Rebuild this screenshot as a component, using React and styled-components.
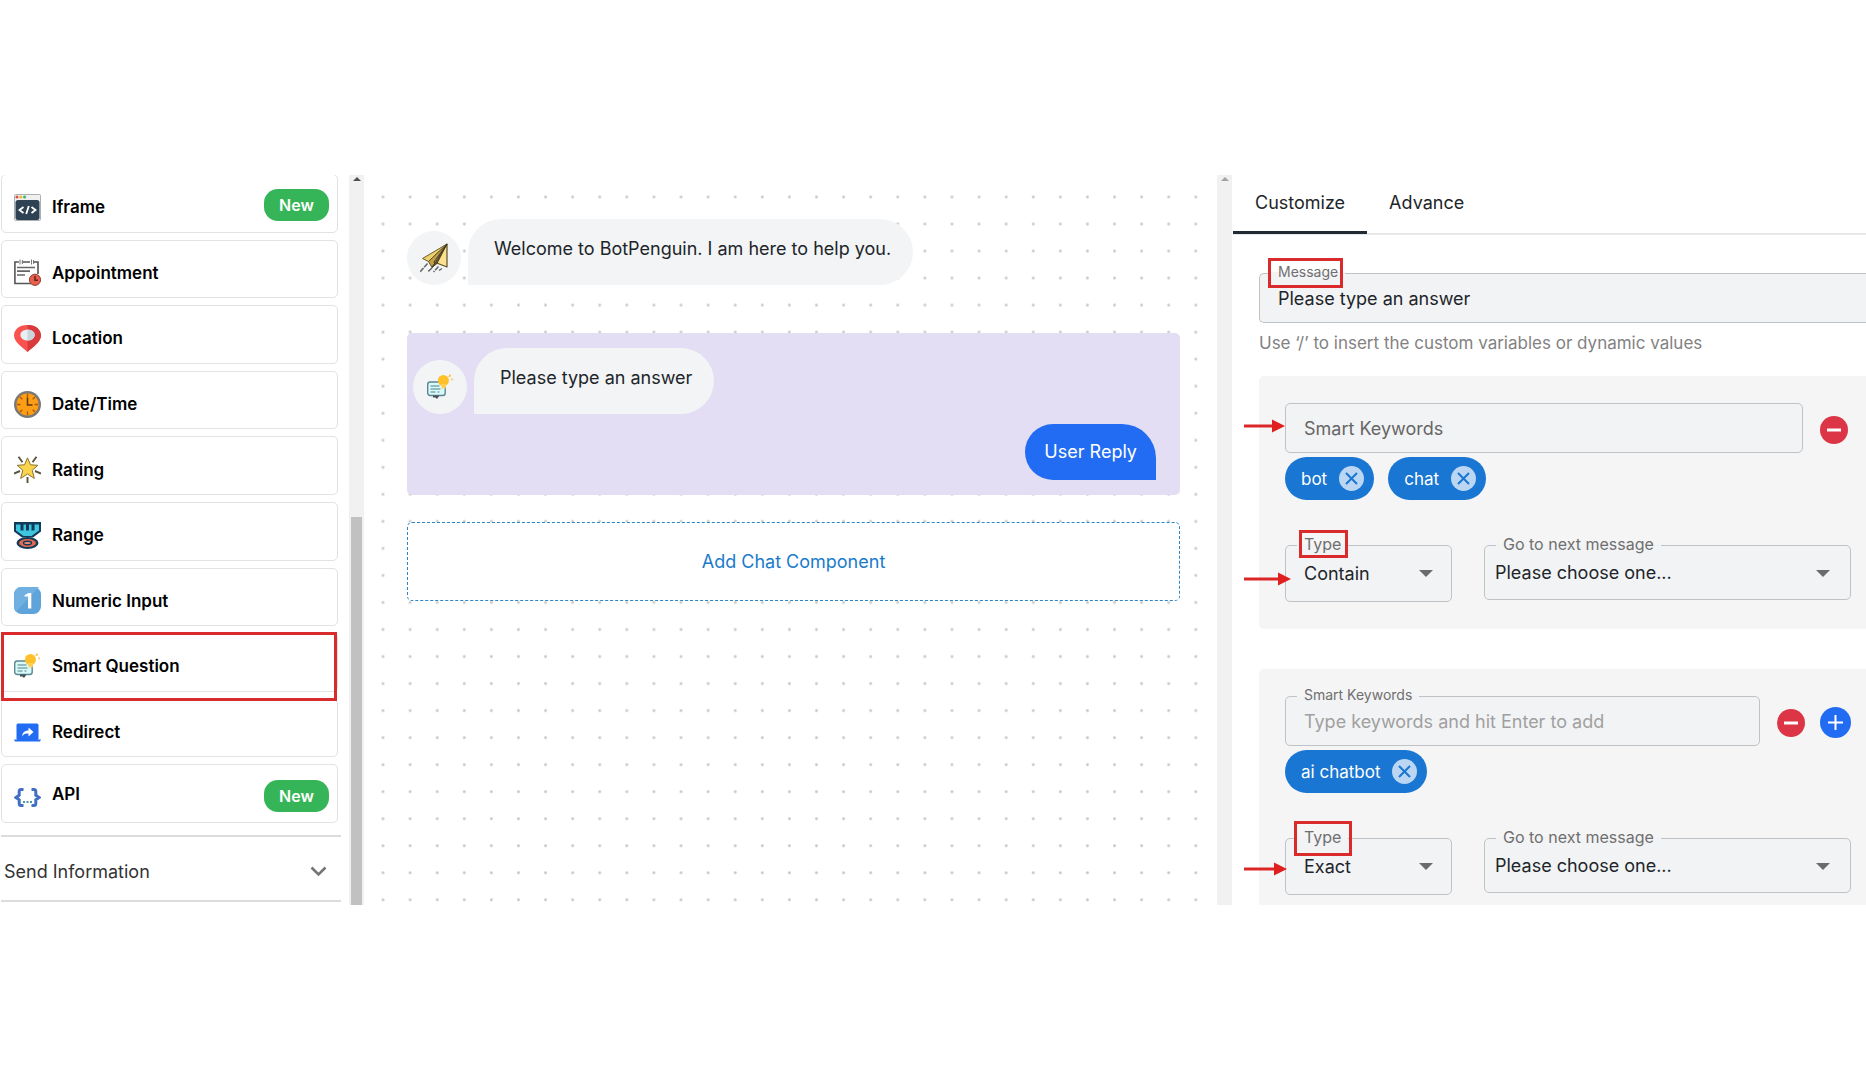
import React from "react";
import styled, { createGlobalStyle, css } from "styled-components";

const RED = "#d92b2b";

const GlobalStyle = createGlobalStyle`
  *, *::before, *::after { box-sizing: border-box; }
  body { margin: 0; background: #fff; overflow: hidden; }
  body, button, input, select { font-family: Inter, "Liberation Sans", sans-serif; }
  button, input, select { margin: 0; }
`;

const Page = styled.div`
  height: 100vh;
  padding: 175px 0;
  color: #212529;
  font-size: 18px;
  line-height: 24px;
`;

const Workspace = styled.main`
  display: grid;
  grid-template-columns: 364px minmax(0, 1fr) 649px;
  height: 100%;
  overflow: hidden;
`;

/* ---------- scroll rails ---------- */

const Rail = styled.div`
  display: flex;
  flex-direction: column;
  align-items: center;
  flex: 0 0 15px;
  padding: 2px 2px 0;
  background: #f1f1f1;
`;

const RailArrow = styled.span`
  border: 4px solid transparent;
  border-top-width: 0;
  border-bottom: 4px solid ${(p) => (p.$dim ? "#a3a3a3" : "#505050")};
`;

const RailThumb = styled.div`
  width: 100%;
  height: 53.3%;
  margin-top: auto;
  background: #c1c1c1;
`;

/* ---------- sidebar ---------- */

const Sidebar = styled.aside`
  display: flex;
  justify-content: space-between;
  min-width: 0;
`;

const SidebarBody = styled.div`
  display: flex;
  flex-direction: column;
  width: 341px;
  margin-top: -1px;
  padding-left: 1px;
`;

const CardList = styled.ul`
  display: flex;
  flex: 1;
  flex-direction: column;
  gap: 7px;
  margin: 0 3px 0 0;
  padding: 0;
  list-style: none;
`;

const CardItem = styled.li`
  position: relative;
  display: flex;
  flex: 1;
  ${(p) =>
    p.$marked &&
    css`
      &::after {
        content: "";
        position: absolute;
        inset: -1px 1px -9px 0;
        border: 3px solid ${RED};
        z-index: 1;
        pointer-events: none;
      }
    `}
`;

const Card = styled.button`
  display: flex;
  flex: 1;
  align-items: center;
  gap: 11px;
  padding: 0 8px 0 12px;
  border: 1px solid #e2e2e2;
  border-radius: 5px;
  background: #fff;
  color: #000;
  text-align: left;
`;

const CardIcon = styled.svg`
  flex: none;
  width: 27px;
  height: 27px;
  margin-top: 8px;
`;

const CardLabel = styled.span`
  flex: 1;
  padding-top: ${(p) => (p.$raised ? 0 : 8)}px;
  font-size: 17px;
  font-weight: 600;
  line-height: 24px;
`;

const NewBadge = styled.span`
  width: 65px;
  margin-top: 4px;
  border-radius: 14px;
  background: #35b558;
  color: #fff;
  font-size: 16px;
  font-weight: 600;
  line-height: 32px;
  text-align: center;
`;

const SectionToggle = styled.button`
  display: flex;
  align-items: center;
  justify-content: space-between;
  height: 67px;
  margin: 12px 0 3px;
  padding: 6px 14px 0 3px;
  border: solid #dcdcdc;
  border-width: 2px 0;
  background: #fff;
  color: #333;
  font-size: 18px;
`;

/* ---------- canvas ---------- */

const DotArea = styled.section`
  margin: 0 8px 0 5px;
  padding: 44px 29px 0 38px;
  background-image: radial-gradient(circle at 14px 22px, #c4c4c4 0, #d0d0d0 1px, transparent 2px);
  background-size: 27px 27px;
  background-repeat: round;
`;

const MessageRow = styled.div`
  display: flex;
  align-items: flex-end;
  gap: 7px;
`;

const Avatar = styled.div`
  display: grid;
  place-items: center;
  width: 54px;
  height: 54px;
  border-radius: 50%;
  background: #f2f4f6;
`;

const Bubble = styled.p`
  margin: 0;
  padding: 18px 22px 24px 26px;
  border-radius: 33px 33px 33px 0;
  background: #f2f4f6;
`;

const SelectedBlock = styled.div`
  display: flex;
  flex-direction: column;
  margin-top: 48px;
  padding: 15px 24px 15px 6px;
  border-radius: 5px;
  background: #e3def3;
`;

const ReplyBubble = styled.p`
  align-self: flex-end;
  margin: 10px 0 0;
  padding: 16px 19px;
  border-radius: 28px 34px 0 28px;
  background: #226cf3;
  color: #fff;
`;

const AddComponent = styled.button`
  width: 100%;
  height: 79px;
  margin-top: 27px;
  border: 1px dashed #2a86c8;
  border-radius: 5px;
  background: #fff;
  color: #1a7bcb;
  font-size: 18px;
`;

/* ---------- settings panel ---------- */

const Settings = styled.aside`
  display: flex;
  min-width: 0;
  overflow: hidden;
`;

const SettingsBody = styled.div`
  flex: 1;
  min-width: 0;
`;

const Tabs = styled.div`
  display: flex;
  height: 60px;
  margin-left: 1px;
  border-bottom: 2px solid #e8e8e8;
`;

const Tab = styled.button`
  height: 59px;
  padding: 0 22px 1px;
  border: 0;
  border-bottom: 3px solid ${(p) => (p.$active ? "#212b33" : "transparent")};
  background: none;
  color: #212529;
  font-size: 18px;
`;

const Form = styled.form`
  padding: 38px 0 0 27px;
`;

const Hint = styled.p`
  margin: 8px 0 21px;
  color: #828282;
  font-size: 17px;
`;

const Field = styled.div`
  position: relative;
  display: flex;
  flex: ${(p) => (p.$width ? `0 0 ${p.$width}px` : 1)};
  min-width: 0;
`;

const fieldBox = css`
  width: 100%;
  border: 1px solid #bfc3c6;
  border-radius: 5px;
  background: #f2f3f5;
  color: #212529;
  font-size: 18px;
`;

const TextInput = styled.input`
  ${fieldBox}
  height: 50px;
  padding: 0 18px;
  ${(p) => p.$bleed && "border-right: 0; border-radius: 5px 0 0 5px;"}
  &::placeholder {
    color: #a0a0a0;
    opacity: 1;
  }
`;

const SelectInput = styled.select`
  ${fieldBox}
  appearance: none;
  height: ${(p) => p.$height}px;
  padding: 0 40px 0 ${(p) => p.$inset}px;
`;

const SelectArrow = styled.span`
  position: absolute;
  top: 25px;
  right: ${(p) => p.$right}px;
  border: 7px solid transparent;
  border-top-color: #6b6b6b;
  border-bottom-width: 0;
  pointer-events: none;
`;

const FloatLabel = styled.label`
  position: absolute;
  top: -11px;
  left: 12px;
  padding: 0 7px;
  background: linear-gradient(${(p) => p.$above || "#f5f5f5"} 50%, #f2f3f5 50%);
  color: #6f6f6f;
  font-size: ${(p) => (p.$small ? 14 : 16)}px;
  line-height: 20px;
  white-space: nowrap;
`;

const RestingLabel = styled.label`
  position: absolute;
  top: 14px;
  left: 19px;
  color: #666;
  pointer-events: none;
`;

const Marker = styled.span`
  position: absolute;
  top: ${(p) => p.$top}px;
  left: ${(p) => p.$left}px;
  width: ${(p) => p.$width}px;
  height: ${(p) => p.$height}px;
  border: 3px solid ${RED};
  pointer-events: none;
`;

const Pointer = styled.svg`
  position: absolute;
  top: ${(p) => p.$top}px;
  left: -41px;
  overflow: visible;
  pointer-events: none;
`;

const Group = styled.section`
  margin-bottom: 40px;
  padding: 27px 15px 27px 26px;
  border-radius: 5px 0 0 5px;
  background: #f5f5f5;
`;

const KeywordRow = styled.div`
  display: flex;
  align-items: center;
`;

const Actions = styled.div`
  display: flex;
  align-items: center;
  gap: 15px;
  min-width: 31px;
  margin-left: 17px;
  padding-top: 3px;
`;

const RoundButton = styled.button`
  display: grid;
  place-items: center;
  width: ${(p) => p.$size}px;
  height: ${(p) => p.$size}px;
  padding: 0;
  border: 0;
  border-radius: 50%;
  background: ${(p) => p.$color};
`;

const Chips = styled.div`
  display: flex;
  gap: 14px;
  margin: 4px 0 45px;
`;

const Chip = styled.span`
  display: flex;
  align-items: center;
  gap: 12px;
  height: 43px;
  padding: 0 10px 0 16px;
  border-radius: 22px;
  background: #1976d2;
  color: #fff;
  font-size: 17px;
`;

const ChipClose = styled.button`
  display: grid;
  place-items: center;
  width: 25px;
  height: 25px;
  padding: 0;
  border: 0;
  border-radius: 50%;
  background: #bad6f2;
`;

const SelectRow = styled.div`
  display: flex;
  align-items: flex-start;
  gap: 32px;
`;

/* ---------- drawings ---------- */

const icons = {
  iframe: (
    <>
      <rect x="0.5" y="0.5" width="26" height="26" rx="1" fill="#f0f0f0" stroke="#a9b0b5" />
      <circle cx="3" cy="3" r="1.6" fill="#e04f4f" />
      <circle cx="6.8" cy="3" r="1.6" fill="#f2b632" />
      <circle cx="10.6" cy="3" r="1.6" fill="#3fb871" />
      <rect x="1.5" y="6" width="24" height="20" rx="2.5" fill="#2f4254" />
      <path d="M9.5 13 5.5 16l4 3M17.5 13l4 3-4 3M14.8 12l-2.6 8" fill="none" stroke="#fff" strokeWidth="1.8" />
    </>
  ),
  appointment: (
    <>
      <path d="M17 24.5H.9V3h4M8 3h8M19 3h5v12" fill="none" stroke="#555" strokeWidth="1.6" />
      <path d="M6 .5v5M17.5.5v5M8.3 1v4M19.6 1v4" stroke="#777" strokeWidth="1" />
      <path d="M3 8.5h18M3 12.2h13M3 16h8" stroke="#666" strokeWidth="1.7" />
      <circle cx="21" cy="20.8" r="5.6" fill="#e8604c" stroke="#8a4038" strokeWidth="1" />
      <path d="M21 17v4.3h3" fill="none" stroke="#5b2620" strokeWidth="1.5" />
    </>
  ),
  location: (
    <>
      <path d="M13.5 0C5 0 0 4.7 0 10.5 0 17 8 22 13.5 27 19 22 27 17 27 10.5 27 4.7 22 0 13.5 0Z" fill="#f9524f" />
      <path d="M13.5 0C22 0 27 4.7 27 10.5 27 17 19 22 13.5 27Z" fill="#d93a3e" />
      <ellipse cx="13.5" cy="10" rx="7.2" ry="5.5" fill="#e9eff2" />
      <path d="M13.5 4.5a7.2 5.5 0 0 1 0 11Z" fill="#c8d5db" />
    </>
  ),
  clock: (
    <>
      <circle cx="13.5" cy="13.5" r="13.5" fill="#7b7874" />
      <circle cx="13.5" cy="13.5" r="11" fill="#ff9d14" />
      <path d="M13.5 3v3.500M13.5 20.5V24M3 13.5h3.500M20.5 13.5H24M6 6l2.300 2.300M21 6l-2.300 2.300M6 21l2.300-2.300M21 21l-2.300-2.300" stroke="#a45d08" strokeWidth="1.4" />
      <path d="M13.5 6.5v7.500h5" fill="none" stroke="#5a3c12" strokeWidth="1.6" />
    </>
  ),
  star: (
    <>
      <path d="M4.5.8l4 5.500M22.5.8l-4 5.500M0 17.5l6-2.500M27 17.5l-6-2.500M13.5 21v6" stroke="#5a543f" strokeWidth="1.9" />
      <path d="M13.5 1.800l3 7 7.300.5-5.600 5 2.200 8.200-6.900-4.500-6.900 4.500 2.200-8.200-5.600-5 7.300-.5Z" fill="#fbd44c" stroke="#8c7430" strokeWidth="1" strokeLinejoin="round" />
    </>
  ),
  medal: (
    <>
      <path d="M0 0h27v9.500L19 15.500H8L0 9.500Z" fill="#123a5b" />
      <path d="M2 2.500h4.500v6h3v-6H12v6h3v-6h2.500v6h3v-6H25V8.500l-7.500 5.500h-8L2 8.500Z" fill="#3fc6df" />
      <ellipse cx="13.5" cy="21" rx="11" ry="6" fill="#123a5b" />
      <ellipse cx="13.5" cy="21" rx="8.5" ry="4" fill="#e5684c" />
      <ellipse cx="13.5" cy="21" rx="4" ry="1.7" fill="#e98d73" stroke="#123a5b" strokeWidth="1.4" />
    </>
  ),
  numeric: (
    <>
      <rect width="27" height="27" rx="7.5" fill="#5ea3d9" />
      <path d="M0 7.5A7.5 7.5 0 0 1 7.5 0H25L2 25A8 8 0 0 1 0 19.5Z" fill="#70b0e0" />
      <path d="M10.5 8.300l4-2.300h2.800v15.500H14V9.500h-3.500Z" fill="#fff" />
    </>
  ),
  smart: (
    <>
      <rect x="0.7" y="8" width="17.5" height="13.5" rx="2.5" fill="#d9fafa" stroke="#5d8790" strokeWidth="1.4" />
      <path d="M3.5 12h9M3.5 15h10M3.5 18h5M10.5 18h2" stroke="#7fa9ad" strokeWidth="1.3" />
      <path d="M6 21.5h6v.8l-2 2.700-1.500-1.500H6Z" fill="#44505a" />
      <circle cx="16.4" cy="6.5" r="5.5" fill="#ffc02a" />
      <path d="M13.5 10h6l-1 4.500h-3.500Z" fill="#ffcf55" />
      <path d="M22.5.5l.6 2M24.5 4.500l1 1.800M21.5 2.500l2.500-.8" stroke="#ffb92e" strokeWidth="1.2" fill="none" />
    </>
  ),
  redirect: (
    <>
      <rect x="2.5" y="4.5" width="22" height="16.5" rx="1.5" fill="#226cf3" />
      <path d="M0 20.5h27l-1 2H1Z" fill="#226cf3" />
      <path d="M8 17.5c.5-4.500 3.500-6 6.500-6V8.500l5 4.500-5 4.500v-3c-3 0-5 .5-6.500 3Z" fill="#fff" />
    </>
  ),
  api: (
    <>
      <path d="M9.5 5.500H7c-1.300 0-1.800.7-1.800 2v3.800L2 13.500l3.200 2.200v3.800c0 1.300.5 2 1.800 2h2.500M17.5 5.500H20c1.300 0 1.800.7 1.800 2v3.800l3.200 2.200-3.200 2.200v3.800c0 1.300-.5 2-1.800 2h-2.500" fill="none" stroke="#426fc4" strokeWidth="3" />
      <path d="M9 18h2M12.5 18h2M16 18h2" stroke="#4f9a94" strokeWidth="2.2" />
    </>
  ),
};

const SmallCross = () => (
  <svg width="13" height="13" viewBox="0 0 13 13" aria-hidden="true">
    <path d="M1 1l11 11M12 1L1 12" stroke="#1976d2" strokeWidth="2" />
  </svg>
);

const PaperPlane = () => (
  <svg width="28" height="30" viewBox="0 0 28 30" aria-hidden="true">
    <g strokeLinejoin="round">
      <path d="M27 1 2.500 15.500l6 3Z" fill="#ecd06a" stroke="#6a5c2f" strokeWidth="1" />
      <path d="M27 1 8.500 18.500 12 24.500Z" fill="#c6a048" stroke="#5c5029" strokeWidth="1" />
      <path d="M27 1 14 19l13 5Z" fill="#fbe08e" stroke="#5c5029" strokeWidth="1.200" />
      <path d="M27 1 12 24.500l5-4Z" fill="#6d5628" stroke="#3a3220" strokeWidth="0.800" />
    </g>
    <path d="M7.500 20.500 0 29M12 25l-4.500 4M18.500 23.500 13.500 29M22 25.500l-3 2" stroke="#666" strokeWidth="1.500" strokeDasharray="5 1" />
  </svg>
);

const RedArrow = ({ top, length }) => (
  <Pointer $top={top} width={length} height="14" aria-hidden="true">
    <path d={`M0 7H${length - 12}`} stroke="#dc2626" strokeWidth="3" />
    <path d={`M${length - 13} 0.500L${length} 7L${length - 13} 13.500Z`} fill="#e01f1f" />
  </Pointer>
);

/* ---------- data ---------- */

const components = [
  { icon: "iframe", label: "Iframe", isNew: true },
  { icon: "appointment", label: "Appointment" },
  { icon: "location", label: "Location" },
  { icon: "clock", label: "Date/Time" },
  { icon: "star", label: "Rating" },
  { icon: "medal", label: "Range" },
  { icon: "numeric", label: "Numeric Input" },
  { icon: "smart", label: "Smart Question", marked: true },
  { icon: "redirect", label: "Redirect" },
  { icon: "api", label: "API", isNew: true, raised: true },
];

const groups = [
  {
    id: "one",
    chips: ["bot", "chat"],
    type: "Contain",
    keywordArrow: 16,
    marker: { $top: -15, $left: 14, $width: 49, $height: 28 },
    typeArrow: { top: 27, length: 47 },
  },
  {
    id: "two",
    chips: ["ai chatbot"],
    floating: true,
    canAdd: true,
    type: "Exact",
    marker: { $top: -17, $left: 9, $width: 58, $height: 35 },
    typeArrow: { top: 24, length: 43 },
  },
];

const KeywordGroup = ({ group }) => (
  <Group>
    <KeywordRow>
      <Field>
        <TextInput
          id={`keywords-${group.id}`}
          placeholder={group.floating ? "Type keywords and hit Enter to add" : undefined}
        />
        {group.floating ? (
          <FloatLabel htmlFor={`keywords-${group.id}`} $small>Smart Keywords</FloatLabel>
        ) : (
          <RestingLabel htmlFor={`keywords-${group.id}`}>Smart Keywords</RestingLabel>
        )}
        {group.keywordArrow && <RedArrow top={group.keywordArrow} length={41} />}
      </Field>
      <Actions>
        <RoundButton type="button" $size={28} $color="#dc3545" aria-label="Remove group">
          <svg width="14" height="4"><path d="M0 2h14" stroke="#fff" strokeWidth="3" /></svg>
        </RoundButton>
        {group.canAdd && (
          <RoundButton type="button" $size={31} $color="#226cf3" aria-label="Add group">
            <svg width="15" height="15"><path d="M0 7.500h15M7.500 0v15" stroke="#fff" strokeWidth="2" /></svg>
          </RoundButton>
        )}
      </Actions>
    </KeywordRow>
    <Chips>
      {group.chips.map((chip) => (
        <Chip key={chip}>
          {chip}
          <ChipClose type="button" aria-label={`Remove ${chip}`}><SmallCross /></ChipClose>
        </Chip>
      ))}
    </Chips>
    <SelectRow>
      <Field $width={167}>
        <SelectInput id={`type-${group.id}`} $height={57} $inset={18} defaultValue={group.type}>
          <option>Contain</option>
          <option>Exact</option>
        </SelectInput>
        <SelectArrow $right={19} />
        <FloatLabel htmlFor={`type-${group.id}`}>Type</FloatLabel>
        <Marker {...group.marker} />
        <RedArrow {...group.typeArrow} />
      </Field>
      <Field>
        <SelectInput id={`next-${group.id}`} $height={55} $inset={10}>
          <option>Please choose one...</option>
        </SelectInput>
        <SelectArrow $right={21} />
        <FloatLabel htmlFor={`next-${group.id}`}>Go to next message</FloatLabel>
      </Field>
    </SelectRow>
  </Group>
);

export default function App() {
  return (
    <Page>
      <GlobalStyle />
      <Workspace>
        <Sidebar>
          <SidebarBody>
            <CardList>
              {components.map((item) => (
                <CardItem key={item.label} $marked={item.marked}>
                  <Card type="button">
                    <CardIcon viewBox="0 0 27 27" aria-hidden="true">{icons[item.icon]}</CardIcon>
                    <CardLabel $raised={item.raised}>{item.label}</CardLabel>
                    {item.isNew && <NewBadge>New</NewBadge>}
                  </Card>
                </CardItem>
              ))}
            </CardList>
            <SectionToggle type="button">
              Send Information
              <svg width="17" height="11" viewBox="0 0 17 11" aria-hidden="true">
                <path d="M1.500 1.500l7 7 7-7" fill="none" stroke="#757575" strokeWidth="2.600" />
              </svg>
            </SectionToggle>
          </SidebarBody>
          <Rail>
            <RailArrow />
            <RailThumb />
          </Rail>
        </Sidebar>

        <DotArea>
          <MessageRow>
            <Avatar><PaperPlane /></Avatar>
            <Bubble>Welcome to BotPenguin. I am here to help you.</Bubble>
          </MessageRow>
          <SelectedBlock>
            <MessageRow>
              <Avatar>
                <svg width="27" height="27" viewBox="0 0 27 27" aria-hidden="true">{icons.smart}</svg>
              </Avatar>
              <Bubble>Please type an answer</Bubble>
            </MessageRow>
            <ReplyBubble>User Reply</ReplyBubble>
          </SelectedBlock>
          <AddComponent type="button">Add Chat Component</AddComponent>
        </DotArea>

        <Settings>
          <Rail><RailArrow $dim /></Rail>
          <SettingsBody>
            <Tabs role="tablist">
              <Tab type="button" role="tab" aria-selected="true" $active>Customize</Tab>
              <Tab type="button" role="tab" aria-selected="false">Advance</Tab>
            </Tabs>
            <Form>
              <Field>
                <TextInput id="message" $bleed defaultValue="Please type an answer" />
                <FloatLabel htmlFor="message" $small $above="#fff">Message</FloatLabel>
                <Marker $top={-15} $left={9} $width={75} $height={30} />
              </Field>
              <Hint>Use ‘/’ to insert the custom variables or dynamic values</Hint>
              {groups.map((group) => <KeywordGroup key={group.id} group={group} />)}
            </Form>
          </SettingsBody>
        </Settings>
      </Workspace>
    </Page>
  );
}
